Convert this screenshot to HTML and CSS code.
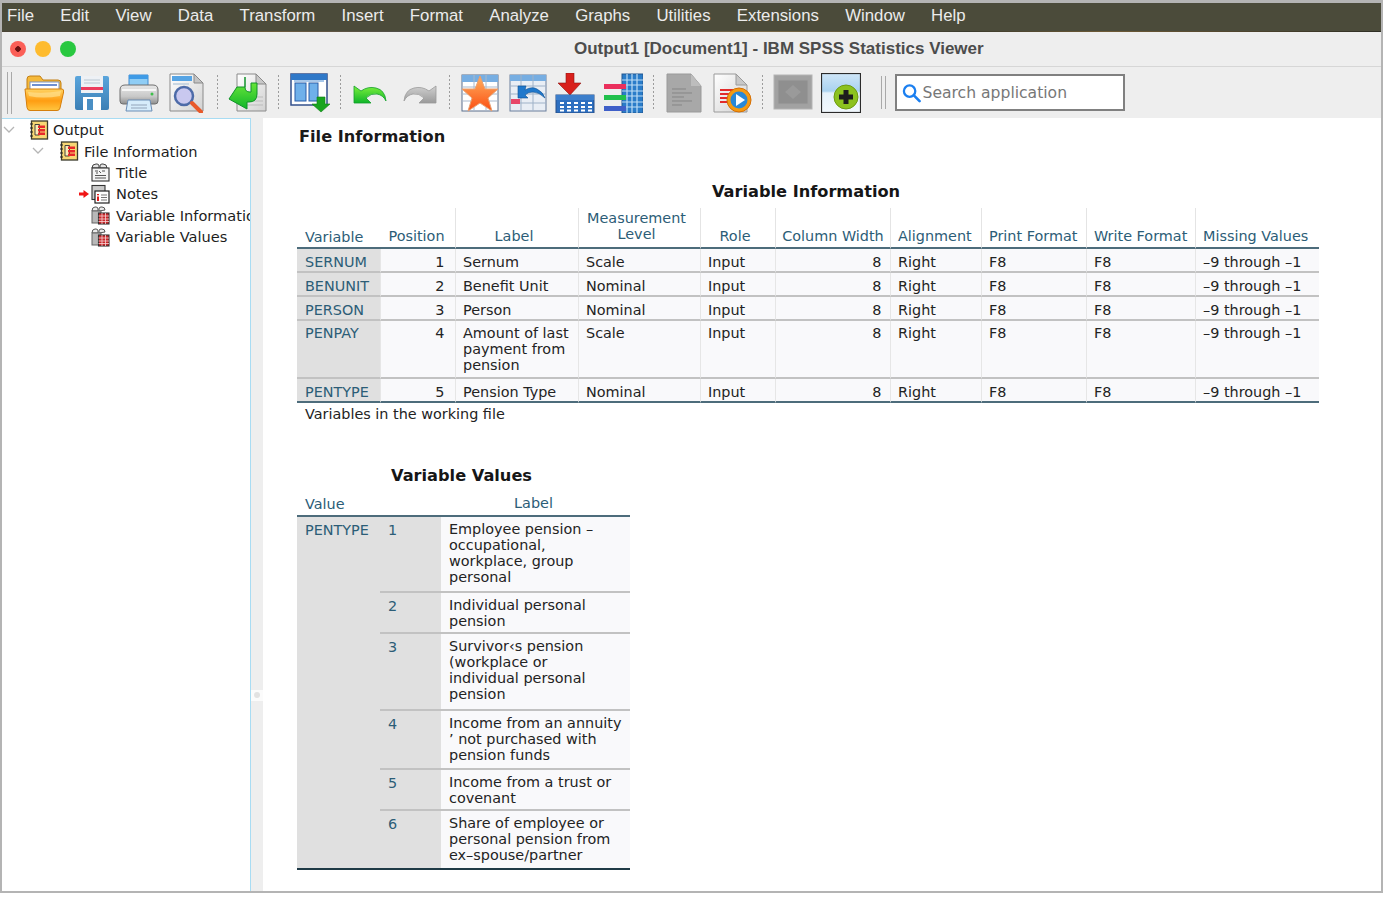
FILE: index.html
```html
<!DOCTYPE html>
<html lang="en">
<head>
<meta charset="utf-8">
<title>Output1 [Document1] - IBM SPSS Statistics Viewer</title>
<link rel="stylesheet" href="styles.css">
</head>
<body>
<svg class="defs" aria-hidden="true">
  <defs>
    <linearGradient id="gFolder" x1="0" y1="0" x2="0" y2="1"><stop offset="0" stop-color="#ffd463"/><stop offset=".55" stop-color="#ff9d12"/><stop offset="1" stop-color="#ffc640"/></linearGradient>
    <linearGradient id="gBlue" x1="0" y1="0" x2="0" y2="1"><stop offset="0" stop-color="#5aa5dc"/><stop offset="1" stop-color="#3b7fb5"/></linearGradient>
    <linearGradient id="gGreen" x1="0" y1="0" x2="0" y2="1"><stop offset="0" stop-color="#7cf03c"/><stop offset="1" stop-color="#0fb52a"/></linearGradient>
    <linearGradient id="gGrey" x1="0" y1="0" x2="0" y2="1"><stop offset="0" stop-color="#d0d0d0"/><stop offset="1" stop-color="#9a9a9a"/></linearGradient>
    <linearGradient id="gPrinter" x1="0" y1="0" x2="0" y2="1"><stop offset="0" stop-color="#e8e8e8"/><stop offset=".6" stop-color="#c8c8c8"/><stop offset="1" stop-color="#8e8e8e"/></linearGradient>
    <linearGradient id="gPaper" x1="0" y1="0" x2="1" y2="1"><stop offset="0" stop-color="#fff"/><stop offset="1" stop-color="#d2d2d2"/></linearGradient>
    <linearGradient id="gStar" x1="0" y1="0" x2="0" y2="1"><stop offset="0" stop-color="#ffb060"/><stop offset="1" stop-color="#fb4d10"/></linearGradient>
    <linearGradient id="gPlus" x1="0" y1="0" x2="0" y2="1"><stop offset="0" stop-color="#cfe6f8"/><stop offset=".45" stop-color="#a9d2f0"/><stop offset=".5" stop-color="#e4f1fb"/><stop offset="1" stop-color="#f2f8fd"/></linearGradient>
    <symbol id="book" viewBox="0 0 20 20">
      <rect x="2.500" y="1" width="16" height="18" fill="#f7d774" stroke="#3a3a2a" stroke-width="1.300"/>
      <path d="M1 4h3M1 8h3M1 12h3M1 16h3" stroke="#222" stroke-width="1.200"/>
      <path d="M6 4.500h4.500v10.500H6z" fill="#f9ecb5" stroke="#333" stroke-width=".9"/>
      <path d="M9 5.500h7v2.400H9zM9 9h7v2.400H9zM9 12.500h7v2.400H9z" fill="#e8282a"/>
    </symbol>
    <symbol id="pageTitle" viewBox="0 0 20 20">
      <path d="M2 6q0-4 4-4h1q2 0 2 2v2zM10 6V4q0-2 2-2h1q4 0 4 4z" fill="#e4e4e4" stroke="#444" stroke-width="1"/>
      <rect x="2" y="6" width="17" height="13" fill="#f4f4f4" stroke="#333" stroke-width="1.100"/>
      <path d="M5 9h3M6 11h2M9 9l2 2M12 9h3M5 13.500h11M5 16h11" stroke="#555" stroke-width="1"/>
    </symbol>
    <symbol id="pageNotes" viewBox="0 0 20 20">
      <rect x="2" y="1.500" width="13" height="14" fill="#c9c9c9" stroke="#333" stroke-width="1.100"/>
      <rect x="5" y="7" width="14" height="12" fill="#fff" stroke="#222" stroke-width="1.200"/>
      <path d="M8 10v1.200M8 12.500V17" stroke="#e01b1b" stroke-width="2"/>
      <path d="M11 11h6M11 13.500h6M11 16h6" stroke="#777" stroke-width="1"/>
    </symbol>
    <symbol id="pageTable" viewBox="0 0 20 20">
      <path d="M2 6q0-4 3-4h1q2 0 2 2v2zM9 6V4q0-2 2-2h1q3 0 3 3z" fill="#ececec" stroke="#555" stroke-width="1"/>
      <rect x="2" y="6" width="9" height="12" fill="#b8b8b8" stroke="#666" stroke-width="1"/>
      <rect x="8.500" y="8" width="10.500" height="11" fill="#c9262a" stroke="#333" stroke-width="1.100"/>
      <path d="M12 8v11M15.500 8v11M8.500 11h10.500M8.500 14h10.500M8.500 16.500h10.500" stroke="#f8d5d5" stroke-width=".8"/>
    </symbol>
  </defs>
</svg>
<div class="window">
  <nav class="menubar">
    <span>File</span><span>Edit</span><span>View</span><span>Data</span><span>Transform</span><span>Insert</span><span>Format</span><span>Analyze</span><span>Graphs</span><span>Utilities</span><span>Extensions</span><span>Window</span><span>Help</span>
  </nav>
  <div class="wallpaper"></div>
  <header class="titlebar">
    <div class="lights"><i class="light red"></i><i class="light amber"></i><i class="light green"></i></div>
    <div class="doc-title">Output1 [Document1] - IBM SPSS Statistics Viewer</div>
  </header>
  <div class="toolbar">
    <div class="grip"></div>
    <div class="group">
      <svg class="tool" viewBox="0 0 40 40"><path d="M3 12V6q0-3 3-3h10l3 4h15q3 0 3 3v10H3z" fill="#f5b93a" stroke="#c27f14"/><rect x="6" y="9" width="29" height="12" fill="#fff" stroke="#7c93c4"/><path d="M8 12h25" stroke="#6f8fd0" stroke-width="2"/><path d="M1 16h37q2 0 1.600 3L36 35q-.5 2.500-3 2.500H6q-2.500 0-3-3z" fill="url(#gFolder)" stroke="#d57f0c"/><path d="M4 19q16 2 33-1l-1 5q-17 3-31 0z" fill="#ffe18f" opacity=".7"/></svg>
      <svg class="tool" viewBox="0 0 40 40"><path d="M3 5q0-2 2-2h30q2 0 2 2v30q0 2-2 2H5q-2 0-2-2z" fill="url(#gBlue)"/><rect x="9" y="3" width="22" height="17" fill="#eef1f5"/><path d="M12 7h16M12 10h16" stroke="#b9c6d2"/><rect x="9" y="14" width="22" height="3" fill="#ec3c5e"/><rect x="11" y="24" width="18" height="13" fill="#fff"/><rect x="15" y="26" width="6" height="11" fill="#4a8fc4"/></svg>
      <svg class="tool" viewBox="0 0 40 40"><path d="M10 2h19v14H10z" fill="#8fcdf5" stroke="#3f8bd0"/><path d="M10 2h19v4H10z" fill="#3f9be6"/><path d="M6 12h28q5 0 5 5v11q0 3-3 3H4q-3 0-3-3V17q0-5 5-5z" fill="url(#gPrinter)" stroke="#6e6e6e"/><path d="M3 17h34" stroke="#f6f6f6" stroke-width="2"/><circle cx="33" cy="21" r="1.500" fill="#3ec04a"/><path d="M9 27h22l2 11H7z" fill="#d6ecfb" stroke="#6a8db5"/><path d="M12 32h16M12 35h16" stroke="#93a4ba"/></svg>
      <svg class="tool" viewBox="0 0 40 40"><path d="M3 1h24l9 9v28H3z" fill="url(#gPaper)" stroke="#8a8a8a"/><path d="M27 1v9h9z" fill="#c4c4c4" stroke="#8a8a8a"/><rect x="5" y="3" width="20" height="5" fill="#56a4e4"/><path d="M6 11h16" stroke="#bcd" stroke-width="1.500"/><circle cx="17" cy="23" r="9" fill="#c9c8ef" stroke="#4d6ba8" stroke-width="2.500"/><path d="M25 30l9 9" stroke="#e8592a" stroke-width="4" stroke-linecap="round"/></svg>
    </div>
    <i class="sep"></i>
    <div class="group">
      <svg class="tool" viewBox="0 0 40 40"><path d="M9 1h19l10 10v27H9z" fill="url(#gPaper)" stroke="#8a8a8a"/><path d="M28 1v10h10z" fill="#c8c8c8" stroke="#8a8a8a"/><path d="M12 19h4M26 24h9M26 28h9M16 32h19" stroke="#bbb"/><path d="M17 4v10q0 5 5 5h1V10h6v11q0 8-8 8h-2v7L1 26l8-12h8z" fill="url(#gGreen)" stroke="#11922a" stroke-width="1"/></svg>
    </div>
    <i class="sep"></i>
    <div class="group">
      <svg class="tool" viewBox="0 0 40 40"><rect x="1" y="1" width="36" height="31" fill="#fff" stroke="#33508c" stroke-width="1.500"/><rect x="1" y="1" width="36" height="6" fill="#2f78c8"/><rect x="5" y="10" width="11" height="18" fill="#6fb0ea" stroke="#2a5da8"/><rect x="19" y="10" width="9" height="18" fill="#6fb0ea" stroke="#2a5da8"/><rect x="4" y="7" width="30" height="2" fill="#a8c8ea"/><path d="M29 24h8v7h5l-9 8-9-8h5z" fill="#19a51f" stroke="#0e7d16" stroke-width=".6" transform="translate(-2 0)"/></svg>
    </div>
    <i class="sep"></i>
    <div class="group">
      <svg class="tool" viewBox="0 0 40 40"><path d="M3 13v17h17l-5-5q5-5 11-4 6 1 9 7-1-11-10-13-8-2-15 3l-7-5z" fill="url(#gGreen)" stroke="#12a02a" stroke-width=".8"/></svg>
      <svg class="tool" viewBox="0 0 40 40"><path d="M37 13v17H20l5-5q-5-5-11-4-6 1-9 7 1-11 10-13 8-2 15 3l7-5z" fill="url(#gGrey)" stroke="#9a9a9a" stroke-width=".8"/></svg>
    </div>
    <i class="sep"></i>
    <div class="group">
      <svg class="tool" viewBox="0 0 40 40"><rect x="2" y="2" width="36" height="36" fill="#fff" stroke="#5a6f8c"/><rect x="2" y="2" width="36" height="7" fill="#77aee2"/><path d="M14 2v36M26 2v36M2 14h36M2 21h36M2 28h36" stroke="#a9b9cc"/><path d="M20 3l5 13h13l-10 9 4 13-12-8-12 8 4-13L2 16h13z" fill="url(#gStar)" stroke="#e8a070"/></svg>
      <svg class="tool" viewBox="0 0 40 40"><rect x="2" y="2" width="36" height="36" fill="#e9eef5" stroke="#6a7f9c"/><rect x="2" y="2" width="36" height="6" fill="#77aee2"/><path d="M13 2v36M25 2v36M2 13h36M2 21h36M2 30h36" stroke="#9fb2c8"/><rect x="3" y="26" width="9" height="5" fill="#e8476a"/><path d="M10 13h8l-1 4q7-4 12-1 6 3 8 9-6-6-12-6-5 0-8 3l3 3H10z" fill="#1f78cc" stroke="#0e4f90" stroke-width=".6"/></svg>
      <svg class="tool" viewBox="0 0 40 40"><path d="M11 0h8v10h7L15 22 3 10h8z" fill="#d8201c" stroke="#8f1510" stroke-width=".6"/><rect x="1" y="22" width="38" height="18" fill="#2d6fc0" stroke="#274f88"/><rect x="1" y="22" width="38" height="5" fill="#3c7ecb"/><path d="M5 30h4M12 30h4M19 30h4M26 30h4M33 30h4M5 34h4M12 34h4M19 34h4M26 34h4M33 34h4M5 37.500h4M12 37.500h4M19 37.500h4M26 37.500h4M33 37.500h4" stroke="#fff" stroke-width="2.200"/></svg>
      <svg class="tool" viewBox="0 0 40 40"><rect x="19" y="1" width="21" height="39" fill="#2a7cc9" stroke="#23568f"/><path d="M24 1v39M29 1v39M34 1v39M19 7h21M19 12h21M19 18h21M19 23h21M19 29h21M19 34h21" stroke="#bcdcf6" stroke-width="1.200"/><rect x="1" y="11" width="22" height="5" fill="#ea2f5c"/><rect x="1" y="22" width="22" height="5" fill="#21c04c"/><rect x="1" y="33" width="22" height="5" fill="#3f5fc8"/></svg>
    </div>
    <i class="sep"></i>
    <div class="group">
      <svg class="tool" viewBox="0 0 40 40"><path d="M3 1h24l10 12v26H3z" fill="#a8a8a8" stroke="#9a9a9a"/><path d="M27 1v12h10z" fill="#bdbdbd"/><path d="M8 16h14M8 20h20M8 24h12M8 28h20M8 32h10" stroke="#858585"/></svg>
      <svg class="tool" viewBox="0 0 40 40"><path d="M2 1h22l11 11v27H2z" fill="url(#gPaper)" stroke="#9a9a9a"/><path d="M24 1v11h11z" fill="#c8c8c8" stroke="#9a9a9a"/><path d="M8 17h14M8 21h16M8 25h12M8 29h12" stroke="#e22b2b" stroke-width="2"/><circle cx="27" cy="27" r="12" fill="#f59a12" stroke="#d56f05"/><circle cx="27" cy="27" r="8.500" fill="#2888d8"/><path d="M24 21l9 6-9 6z" fill="#fbfdff"/></svg>
    </div>
    <i class="sep"></i>
    <div class="group">
      <svg class="tool" viewBox="0 0 40 40"><rect x="1" y="2" width="38" height="34" fill="#a2a2a2" stroke="#b4b4b4"/><rect x="5" y="7" width="30" height="24" fill="#8f8f8f" stroke="#9f9f9f"/><path d="M12 19l8-7 8 7-8 7z" fill="#9a9a9a"/></svg>
      <svg class="tool" viewBox="0 0 40 40"><rect x=".5" y=".5" width="39" height="39" fill="url(#gPlus)" stroke="#2b2b2b" stroke-width="1.200"/><circle cx="25" cy="24" r="12" fill="#8cc21f" stroke="#6d9a12"/><path d="M22.500 17h5v4.500h4.500v5h-4.500V31h-5v-4.500H18v-5h4.500z" fill="#1d1d1d"/></svg>
    </div>
    <div class="grip grip-inner"></div>
    <div class="search">
      <svg class="search-icon" viewBox="0 0 20 20"><circle cx="8" cy="8" r="6" fill="none" stroke="#1b7ff0" stroke-width="2.400"/><path d="M12.500 12.500l6 6" stroke="#1b7ff0" stroke-width="2.800" stroke-linecap="round"/></svg>
      <span>Search application</span>
    </div>
  </div>
  <main class="main">
    <aside class="tree">
      <div class="node lvl0">
        <svg class="chev" viewBox="0 0 12 8"><path d="M1 1l5 5 5-5" fill="none" stroke="#b5b5b5" stroke-width="1.300"/></svg>
        <svg class="node-icon"><use href="#book"/></svg><span>Output</span>
      </div>
      <div class="node lvl1">
        <svg class="chev" viewBox="0 0 12 8"><path d="M1 1l5 5 5-5" fill="none" stroke="#b5b5b5" stroke-width="1.300"/></svg>
        <svg class="node-icon"><use href="#book"/></svg><span>File Information</span>
      </div>
      <div class="node lvl2"><svg class="node-icon"><use href="#pageTitle"/></svg><span>Title</span></div>
      <div class="node lvl2 current">
        <svg class="marker" viewBox="0 0 10 10"><path d="M0 3.500h4.500V1L10 5 4.500 9V6.500H0z" fill="#f01414"/></svg>
        <svg class="node-icon"><use href="#pageNotes"/></svg><span>Notes</span>
      </div>
      <div class="node lvl2"><svg class="node-icon"><use href="#pageTable"/></svg><span>Variable Information</span></div>
      <div class="node lvl2"><svg class="node-icon"><use href="#pageTable"/></svg><span>Variable Values</span></div>
    </aside>
    <div class="splitter"><i class="handle"></i></div>
    <section class="pane">
      <h1 class="doc-heading">File Information</h1>
      <table class="pivot info">
        <caption>Variable Information</caption>
        <colgroup><col class="c1"><col class="c2"><col class="c3"><col class="c4"><col class="c5"><col class="c6"><col class="c7"><col class="c8"><col class="c9"><col class="c10"></colgroup>
        <thead>
          <tr>
            <th class="left low nl">Variable</th><th class="nl pos">Position</th><th>Label</th><th class="two">Measurement<br>Level</th><th>Role</th><th class="wide">Column Width</th><th class="left">Alignment</th><th class="left">Print Format</th><th class="left">Write Format</th><th class="left">Missing Values</th>
          </tr>
        </thead>
        <tbody>
          <tr class="r24"><th class="rh">SERNUM</th><td class="num">1</td><td>Sernum</td><td>Scale</td><td>Input</td><td class="num">8</td><td>Right</td><td>F8</td><td>F8</td><td class="nowrap">–9 through –1</td></tr>
          <tr class="r24"><th class="rh">BENUNIT</th><td class="num">2</td><td>Benefit Unit</td><td>Nominal</td><td>Input</td><td class="num">8</td><td>Right</td><td>F8</td><td>F8</td><td class="nowrap">–9 through –1</td></tr>
          <tr class="r24"><th class="rh">PERSON</th><td class="num">3</td><td>Person</td><td>Nominal</td><td>Input</td><td class="num">8</td><td>Right</td><td>F8</td><td>F8</td><td class="nowrap">–9 through –1</td></tr>
          <tr class="r58"><th class="rh">PENPAY</th><td class="num">4</td><td>Amount of last payment from pension</td><td>Scale</td><td>Input</td><td class="num">8</td><td>Right</td><td>F8</td><td>F8</td><td class="nowrap">–9 through –1</td></tr>
          <tr class="r24 last"><th class="rh">PENTYPE</th><td class="num">5</td><td>Pension Type</td><td>Nominal</td><td>Input</td><td class="num">8</td><td>Right</td><td>F8</td><td>F8</td><td class="nowrap">–9 through –1</td></tr>
        </tbody>
      </table>
      <p class="footnote">Variables in the working file</p>
      <table class="pivot values">
        <caption>Variable Values</caption>
        <colgroup><col class="v1"><col class="v2"><col class="v3"></colgroup>
        <thead>
          <tr><th class="left low nl" colspan="2">Value</th><th class="nl">Label</th></tr>
        </thead>
        <tbody>
          <tr class="h76"><th class="rh" rowspan="6">PENTYPE</th><th class="rh val">1</th><td>Employee pension – occupational, workplace, group personal</td></tr>
          <tr class="h41"><th class="rh val">2</th><td>Individual personal pension</td></tr>
          <tr class="h77"><th class="rh val">3</th><td>Survivor‹s pension<br>(workplace or<br>individual personal<br>pension</td></tr>
          <tr class="h59"><th class="rh val">4</th><td>Income from an annuity ’ not purchased with pension funds</td></tr>
          <tr class="h41"><th class="rh val">5</th><td>Income from a trust or covenant</td></tr>
          <tr class="h59 last"><th class="rh val">6</th><td>Share of employee or personal pension from ex–spouse/partner</td></tr>
        </tbody>
      </table>
    </section>
  </main>
</div>
</body>
</html>
```
FILE: styles.css
```css
* { box-sizing: border-box; }
html, body { margin: 0; padding: 0; background: #fff; }
body { width: 1387px; height: 898px; overflow: hidden; font-family: "DejaVu Sans", sans-serif; }
.defs { position: absolute; width: 0; height: 0; }

.window {
  width: 1383px; height: 893px;
  border: solid #b4b4b4; border-width: 3px 2px 2px 2px;
  display: flex; flex-direction: column;
  overflow: hidden;
}

.menubar {
  height: 28px; flex: none;
  background: #4b4b3a; color: #ececec;
  display: flex; align-items: center; gap: 26.25px;
  padding: 0 0 3px 5px;
  font: 16.8px "Liberation Sans", sans-serif;
}
.wallpaper {
  height: 1px; flex: none;
  background: linear-gradient(90deg, #4a4436, #6b5a3e 20%, #3e4650 35%, #7a6a48 55%, #3a3a2c 70%, #6e5a36 80%, #2e2e24);
}

.titlebar {
  height: 35px; flex: none;
  background: #eeeeee;
  border-bottom: 1px solid #d6d6d6;
  display: flex; align-items: center;
}
.lights { display: flex; gap: 9px; padding-left: 8px; }
.light { width: 16px; height: 16px; border-radius: 50%; display: block; }
.light.red { background: radial-gradient(circle, #6a1010 0 2.5px, #fb5f57 3px); }
.light.amber { background: #febb2e; }
.light.green { background: #29c840; }
.doc-title {
  margin-left: 498px;
  font: bold 17px "Liberation Sans", sans-serif;
  color: #4c4c4c;
}

.toolbar {
  height: 51px; flex: none;
  background: #eeeeee;
  display: flex; align-items: center;
  padding-left: 5px;
}
.grip {
  width: 5px; height: 42px; flex: none;
  border: solid #a9a9a9; border-width: 0 1.5px;
  margin-right: 12px;
}
.grip-inner { margin: 0 9px 0 20px; height: 33px; }
.group { display: flex; gap: 7.5px; }
.tool { width: 40px; height: 40px; display: block; flex: none; }
.sep {
  width: 1px; height: 36px; flex: none;
  margin: 0 10.25px;
  background: repeating-linear-gradient(#9c9c9c 0 2px, transparent 2px 4px);
}
.search {
  width: 230px; height: 37px; flex: none;
  background: #fff; border: 2px solid #808080;
  display: flex; align-items: center; gap: 2px;
  padding-left: 5px;
  color: #777; font-size: 15.6px;
}
.search-icon { width: 19px; height: 20px; flex: none; }

.main { flex: 1; min-height: 0; display: flex; background: #fff; }

.tree {
  width: 249px; flex: none;
  background: #fff;
  border: solid #a8dcf3; border-width: 1px 1px 0 0;
  overflow: hidden;
  color: #1d1d1d; font-size: 14.6px;
}
.node { height: 21.4px; display: flex; align-items: center; white-space: nowrap; }
.node span { margin-left: 4px; }
.lvl0 { padding-left: 1px; }
.lvl0 .chev { margin-right: 14px; }
.lvl0 span { margin-left: 4px; }
.lvl1 { padding-left: 30px; }
.lvl1 .chev { margin-right: 15px; }
.lvl1 span { margin-left: 5px; }
.lvl2 { padding-left: 88px; }
.lvl2 span { margin-left: 6px; }
.lvl2.current { padding-left: 77px; }
.chev { width: 12px; height: 8px; flex: none; }
.node-icon { width: 20px; height: 20px; flex: none; }
.marker { width: 10px; height: 10px; flex: none; margin-right: 1px; }

.splitter {
  width: 12px; flex: none;
  background: #eeeeee;
  position: relative;
}
.handle {
  position: absolute; left: 0; right: 0; top: 572px; height: 11px;
  background: #fbfbfb;
}
.handle::after {
  content: ""; position: absolute; left: 3px; top: 2px;
  width: 6px; height: 6px; border-radius: 50%; background: #e2e2e2;
}

.pane { flex: 1; min-width: 0; padding: 9px 0 0 34px; background: #fff; overflow: hidden; }
.doc-heading { margin: 0 0 0 2px; font-size: 16.2px; line-height: 20px; font-weight: bold; color: #1a1a1a; }

.pivot {
  table-layout: fixed;
  border-collapse: separate; border-spacing: 0;
  font-size: 14.4px; line-height: 16px;
  color: #232323;
}
.pivot caption {
  font-size: 16.2px; line-height: 20px; font-weight: bold; color: #161616;
  padding-bottom: 6px;
}
.pivot thead th {
  color: #2c5d77; font-weight: normal; text-align: center;
  vertical-align: bottom;
  padding: 0 6px 3.5px 0;
  border-bottom: 2px solid #4d6c7b;
  border-left: 1px solid #e4e4e4;
}
.pivot thead th.left { text-align: left; padding-left: 7px; padding-right: 0; }
.pivot thead th.nl.left { padding-left: 8px; }
.pivot thead th.low { padding-bottom: 2.5px; }
.pivot thead th.nl { border-left: 0; }
.pivot thead th.pos { padding-right: 2px; }
.pivot thead th.wide { padding-right: 0; }
.pivot thead th.two { padding-bottom: 5.5px; }
.pivot td, .pivot tbody th {
  vertical-align: top;
  padding: 5px 4px 0 7px;
  text-align: left;
  font-weight: normal;
  background: #f9f9fb;
  border-bottom: 2px solid #c2c2c2;
  border-left: 1px solid #e6e6e6;
}
.pivot tbody th { padding-left: 8px; }
.pivot tbody th.rh { background: #e0e0e0; color: #2c5d77; border-left: 0; }
.pivot td.num { text-align: right; padding-right: 10.5px; }
.pivot td.num:nth-child(6) { padding-right: 8.5px; }
.pivot td.nowrap { white-space: nowrap; }
.pivot tr.last td, .pivot tr.last th { border-bottom-color: #4d6c7b; }

.info { width: 1022px; margin-top: 35px; }
.info caption { padding-right: 4px; }
.c1 { width: 83px; } .c2 { width: 75px; } .c3 { width: 123px; } .c4 { width: 122px; }
.c5 { width: 75px; } .c6 { width: 115px; } .c7 { width: 91px; } .c8 { width: 105px; }
.c9 { width: 109px; } .c10 { width: 124px; }
.info thead tr { height: 41px; }
.r24 { height: 24px; }
.r58 { height: 58px; }
.info .r58 td, .info .r58 th { padding-top: 4px; }

.footnote { margin: 2.5px 0 0 8px; line-height: 16px; font-size: 14.4px; color: #232323; }

.values { width: 333px; margin-top: 44px; }
.v1 { width: 83px; } .v2 { width: 61px; } .v3 { width: 189px; }
.values caption { padding: 0 4px 9px 0; }
.values thead tr { height: 22px; }
.values thead th.nl:not(.left) { padding-right: 4px; }
.values td { padding: 4px 2px 0 8px; border-left: 0; }
.values tbody th { padding-top: 5px; }
.values tbody th.rh { border-bottom: 2px solid #1f3a46; }
.values tbody th.rh.val { border-bottom: 2px solid #c2c2c2; }
.values tr.last th.rh.val { border-bottom-color: #1f3a46; }
.values tr.last td { border-bottom-color: #1f3a46; }
.h76 { height: 76px; } .h41 { height: 41px; } .h77 { height: 77px; } .h59 { height: 59px; }
```
